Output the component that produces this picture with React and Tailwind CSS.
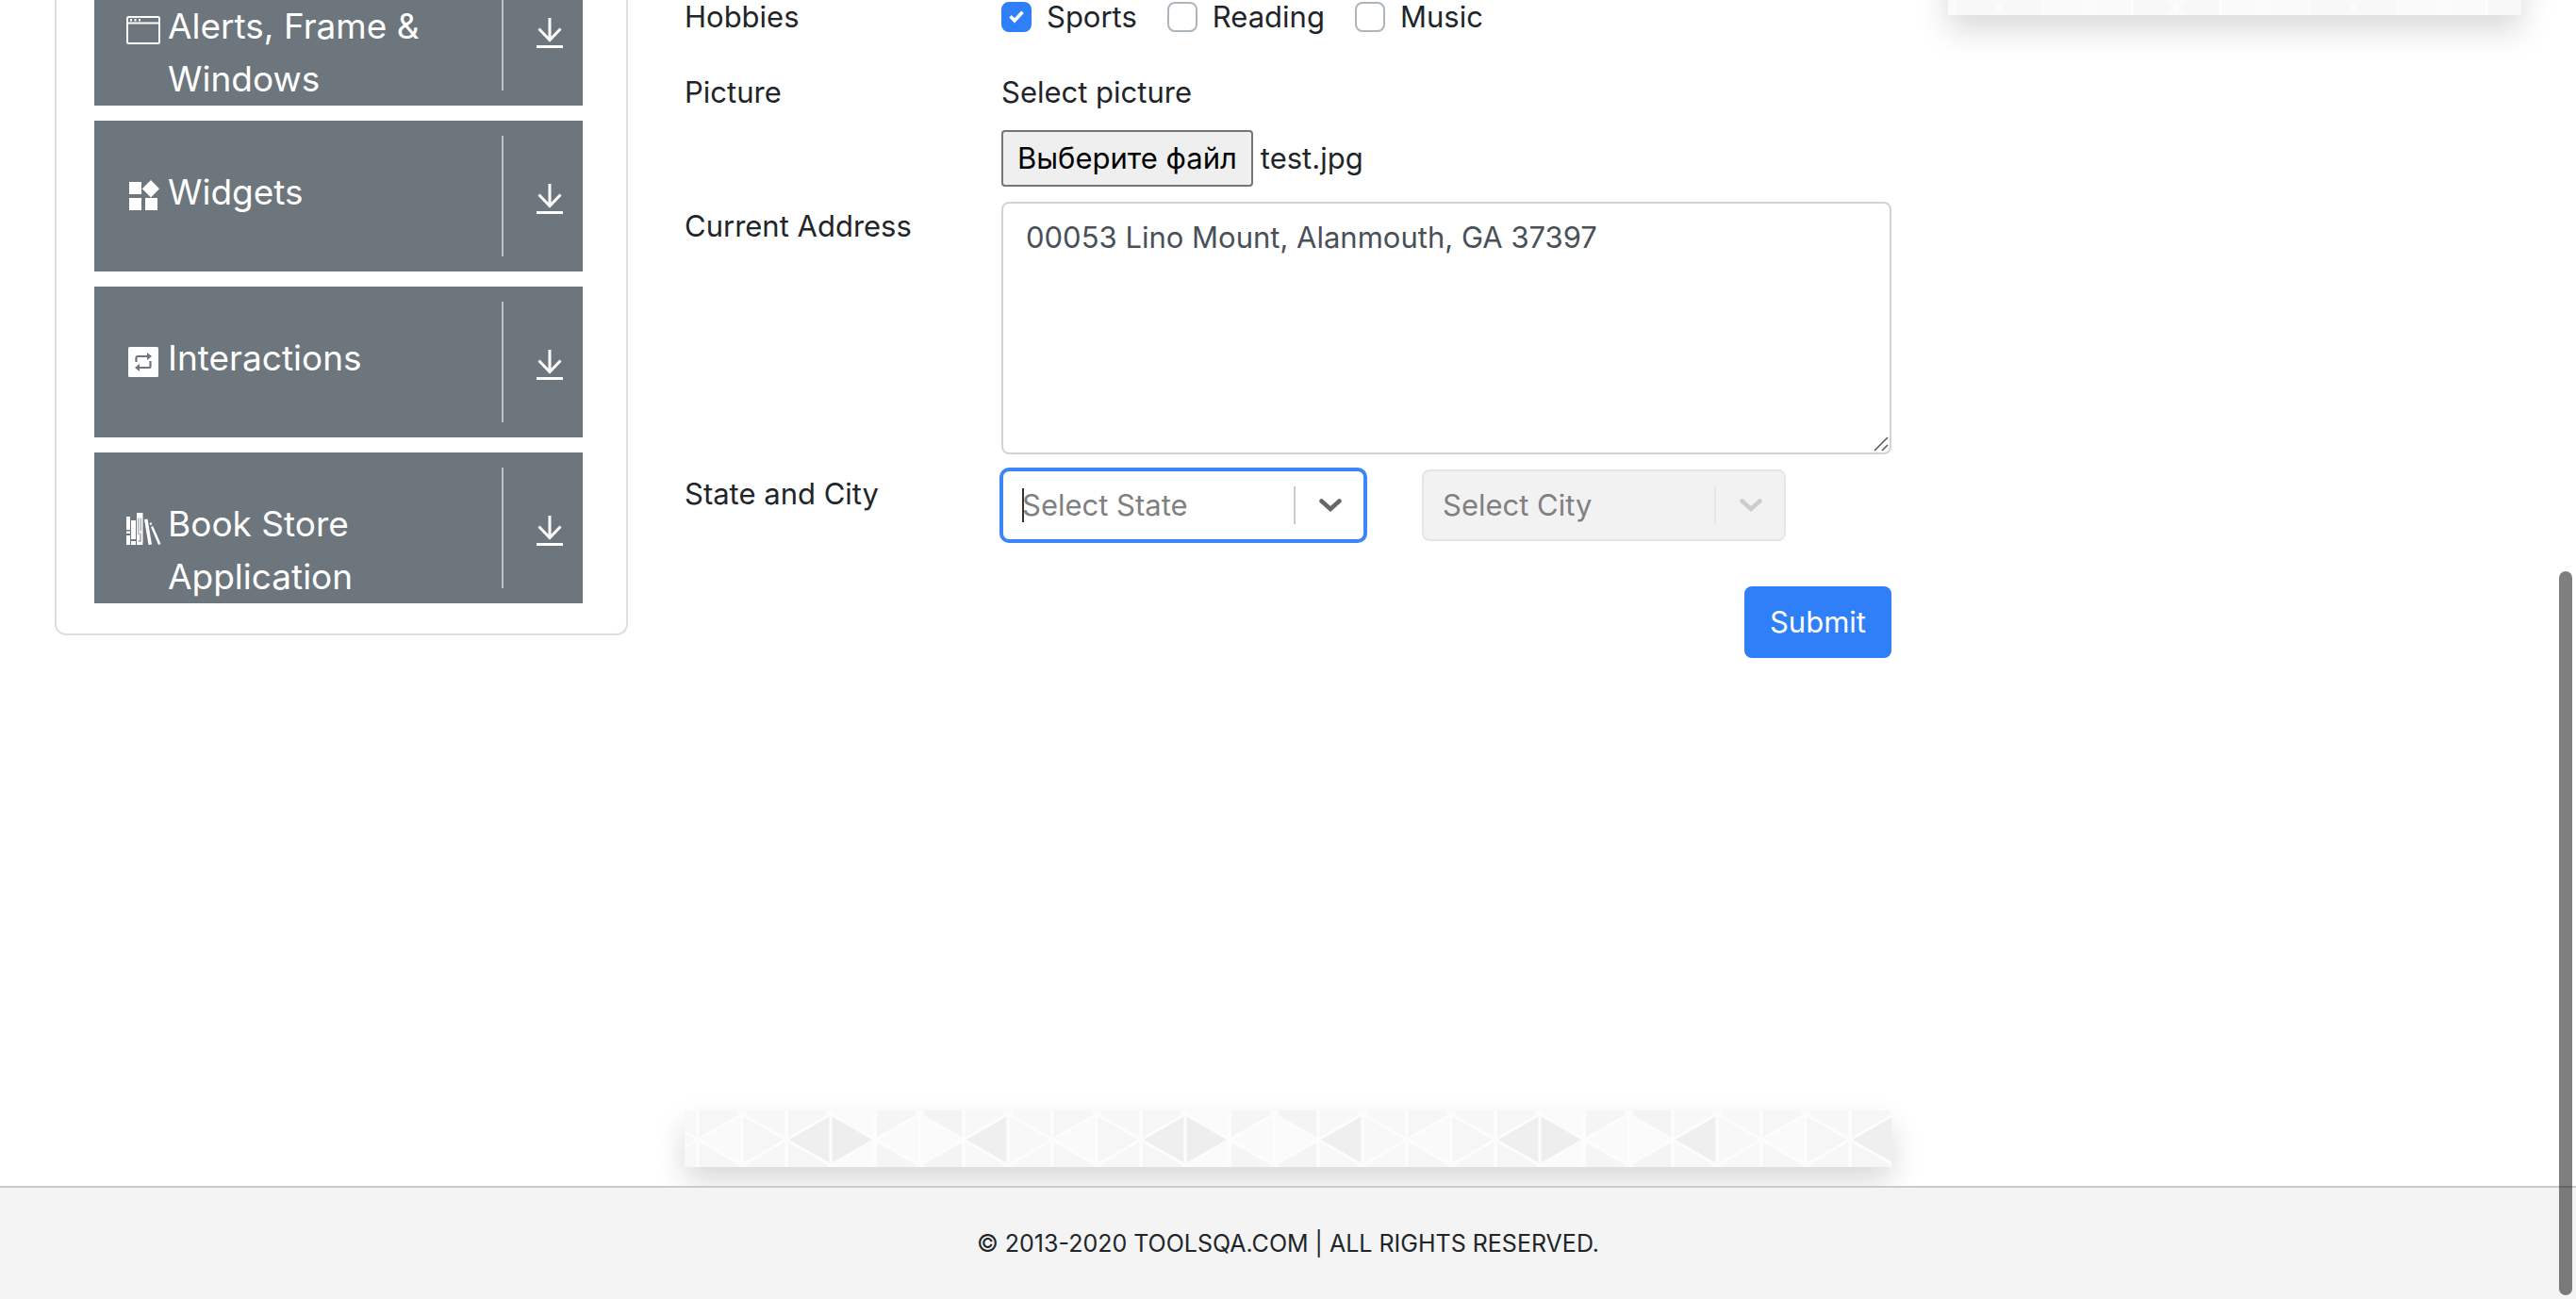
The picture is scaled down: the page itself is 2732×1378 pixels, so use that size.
import { useRef } from "react";

function WindowIcon() {
  return (
    <svg viewBox="0 0 36 36" className="mt-3.5 size-9 shrink-0" fill="none" stroke="currentColor">
      <rect x="1" y="4" width="34" height="28" rx="1.5" strokeWidth="2" />
      <path d="M1 10.5h34" strokeWidth="2" />
      <path d="M4 7.2h2M8.5 7.2h2M13 7.2h2" strokeWidth="2.4" />
    </svg>
  );
}

function WidgetsIcon() {
  return (
    <svg viewBox="0 0 36 36" className="mt-3.5 size-9 shrink-0" fill="currentColor">
      <path d="M3 3h13v13H3zM3 20h13v13H3zM20 20h13v13H20zM26 1l9 9.2-9 9.2-9.2-9.2z" />
    </svg>
  );
}

function SwapIcon() {
  return (
    <svg viewBox="0 0 36 36" className="mt-3.5 size-9 shrink-0">
      <rect x="2" y="2" width="32" height="32" rx="1.5" fill="currentColor" />
      <g fill="none" stroke="#6d757d" strokeWidth="2.2">
        <path d="M10.5 18v-4.500q0-1.500 1.500-1.500h11" />
        <path d="M25.5 17v5.500q0 1.500-1.500 1.500H13" />
      </g>
      <path d="M22 8l5 4-5 4zM14 20l-5 4 5 4z" fill="#6d757d" />
    </svg>
  );
}

function BooksIcon() {
  return (
    <svg viewBox="0 -1 36 36" className="mt-3.5 size-9 shrink-0 overflow-visible" fill="currentColor">
      <path d="M0 5h4v14H0zM0 20.500h4v2.500H0zM0 25h4v10H0zM5 9h5v20H5zM5 31h5v4H5z" />
      <path fillRule="evenodd" d="M11 1h6.500v34H11zM12.500 6.500v18h.8v-18zM14.800 6.500v14h.8v-14zM12.500 31.500h3v-9h-1v8h-2z" />
      <path d="M19 8l3.500-.5 4.500 27-3.500.5zM24.500 12l2-.8.800 2-2 .8zM26 16l2.200-.9 8.300 18.900-2.500 1z" />
    </svg>
  );
}

function DownloadIcon() {
  return (
    <svg viewBox="0 0 30 34" className="h-[34px] w-[30px]" fill="none" stroke="currentColor" strokeWidth="3">
      <path d="M15 1v23M3.500 12.500L15 24.500l11.500-12M1 31.500h28" />
    </svg>
  );
}

const menu = [
  { label: "Alerts, Frame & Windows", Icon: WindowIcon },
  { label: "Widgets", Icon: WidgetsIcon },
  { label: "Interactions", Icon: SwapIcon },
  { label: "Book Store Application", Icon: BooksIcon },
];

function Sidebar() {
  return (
    <nav className="-mt-12 flex flex-col gap-4 self-start rounded-b-xl border-2 border-t-0 border-[#dfdfdf] pr-[46px] pb-8 pl-10">
      {menu.map(({ label, Icon }) => (
        <button
          key={label}
          type="button"
          className="flex h-40 items-start bg-[#6d757d] text-left text-[37px] leading-14 text-white"
        >
          <span className="flex flex-1 gap-2 pt-12 pl-[34px]">
            <Icon />
            {label}
          </span>
          <span className="mt-4 flex h-32 w-[86px] items-center justify-center border-l-2 border-[#bfbfbf] pt-1.5 pl-3.5">
            <DownloadIcon />
          </span>
        </button>
      ))}
    </nav>
  );
}

function Hobby({ id, label, checked }) {
  return (
    <label htmlFor={id} className="flex items-center gap-4">
      <span className="relative flex size-8">
        <input
          id={id}
          type="checkbox"
          defaultChecked={checked}
          className="peer size-8 appearance-none rounded-lg border-2 border-[#adb5bd] bg-white checked:border-[#2f7ff8] checked:bg-[#2f7ff8]"
        />
        <svg
          viewBox="0 0 16 16"
          className="pointer-events-none absolute inset-2 hidden size-4 peer-checked:block"
          fill="none"
          stroke="#fff"
          strokeWidth="3.6"
        >
          <path d="M1.500 7.200L6 11.800l8.500-9" />
        </svg>
      </span>
      {label}
    </label>
  );
}

function Select({ id, label, placeholder, disabled, focused }) {
  return (
    <div className="relative flex">
      <select
        id={id}
        aria-label={label}
        disabled={disabled}
        className={
          focused
            ? "h-19 w-full appearance-none rounded-lg border-2 border-[#3d86f7] bg-white pl-5 text-[#808080] ring-2 ring-[#3d86f7] outline-none"
            : "h-19 w-full appearance-none rounded-lg border-2 border-[#e6e6e6] bg-[#f2f2f2] pl-5 text-[#808080] opacity-100 outline-none"
        }
      >
        <option>{placeholder}</option>
      </select>
      {focused && <span className="absolute top-5 left-[22px] h-9 w-0.5 bg-[#333]" />}
      <span
        className={
          focused
            ? "pointer-events-none absolute inset-y-[18px] right-0 flex w-[76px] items-center justify-center border-l-2 border-[#ccc] text-[#666]"
            : "pointer-events-none absolute inset-y-[18px] right-0 flex w-[76px] items-center justify-center border-l-2 border-[#e6e6e6] text-[#ccc]"
        }
      >
        <svg viewBox="0 0 24 14" className="h-3.5 w-6" fill="none" stroke="currentColor" strokeWidth="4.500" strokeLinecap="round">
          <path d="M2.500 2.500L12 11l9.500-8.500" />
        </svg>
      </span>
    </div>
  );
}

function PracticeForm() {
  const file = useRef(null);
  return (
    <form className="grid grid-cols-[69fr_236fr] items-start gap-x-[60px]">
      <span>Hobbies</span>
      <div className="flex h-9 items-center gap-8">
        <Hobby id="sports" label="Sports" checked />
        <Hobby id="reading" label="Reading" />
        <Hobby id="music" label="Music" />
      </div>

      <span className="mt-11">Picture</span>
      <div className="mt-11 flex flex-col gap-[22px]">
        <label htmlFor="picture">Select picture</label>
        <div className="flex items-center gap-2">
          <input ref={file} id="picture" type="file" className="hidden" />
          <button
            type="button"
            onClick={() => file.current.click()}
            className="h-15 rounded border-2 border-[#767676] bg-[#efefef] px-[15px] text-black"
          >
            Выберите файл
          </button>
          <span>test.jpg</span>
        </div>
      </div>

      <label htmlFor="address" className="mt-6">Current Address</label>
      <div className="relative mt-4 flex">
        <textarea
          id="address"
          defaultValue="00053 Lino Mount, Alanmouth, GA 37397"
          className="h-67 w-full resize-none rounded-lg border-2 border-[#ced4da] bg-white px-6 py-3 leading-12 text-[#495057] outline-none"
        />
        <svg
          viewBox="0 0 16 16"
          className="pointer-events-none absolute right-[3px] bottom-[3px] size-4"
          fill="none"
          stroke="#555"
          strokeWidth="1.500"
        >
          <path d="M1 15L15 1M9 15l6-6" />
        </svg>
      </div>

      <span className="mt-6">State and City</span>
      <div className="mt-4 grid grid-cols-[193fr_193fr_26fr] gap-[60px]">
        <Select id="state" label="State" placeholder="Select State" focused />
        <Select id="city" label="City" placeholder="Select City" disabled />
      </div>

      <button
        type="submit"
        className="col-span-2 mt-12 h-19 justify-self-end rounded-lg bg-[#2f7ff8] px-[27px] text-white"
      >
        Submit
      </button>
    </form>
  );
}

const columns = [
  { face: "#fafafa", corner: "#f6f6f6" },
  { face: "#f6f6f6", corner: "#f7f7f7" },
  { face: "#efefef", corner: "#f6f6f6" },
  { face: "#eeeeee", corner: "#fbfbfb" },
  { face: "#fafafa", corner: "#f5f5f5" },
  { face: "#fbfbfb", corner: "#f4f4f4" },
  { face: "#efefef", corner: "#f8f8f8" },
  { face: "#f8f8f8", corner: "#f8f8f8" },
];

function BottomBanner() {
  return (
    <div className="mt-auto mb-5 h-15 shadow-[0_16px_32px_rgba(0,0,0,0.15)]">
      <svg className="block h-full w-full bg-[#f7f7f7]">
        <defs>
          <pattern id="triangles" x="14" width="376" height="60" patternUnits="userSpaceOnUse">
            {columns.map(({ face, corner }, i) => {
              const x = i * 47;
              const near = i % 2 === 0 ? x : x + 47;
              const far = i % 2 === 0 ? x + 47 : x;
              return (
                <g key={x}>
                  <rect x={x} width="47" height="60" fill={corner} />
                  <path d={`M${near} 31L${far} 4V58Z`} fill={face} />
                </g>
              );
            })}
            {[0, 94, 188, 282].map((x) => (
              <path
                key={x}
                d={`M${x} 31L${x + 47} 4L${x + 94} 31L${x + 47} 58ZM${x + 42} 1L${x + 47} 4l5-3M${x + 42} 61L${x + 47} 58l5 3M${x} 0V60M${x + 47} 0V60M${x + 94} 0V60`}
                fill="none"
                stroke="#fdfdfd"
                strokeWidth="3"
              />
            ))}
          </pattern>
        </defs>
        <rect width="100%" height="60" fill="url(#triangles)" />
      </svg>
    </div>
  );
}

function SideBanner() {
  return (
    <aside className="-mt-36 h-40 self-start shadow-[0_16px_32px_rgba(0,0,0,0.15)]">
      <svg className="block h-full w-full">
        <defs>
          <pattern id="facets" x="7" width="188" height="16" patternUnits="userSpaceOnUse">
            <rect width="188" height="16" fill="#f8f8f8" />
            <rect x="94" width="94" height="16" fill="#fafafa" />
            <path
              d="M0 0v16M94 0v16M47 0v16M141 0v16M188 0v16M38 0l18 16M56 0L38 16M132 0l18 16M150 0l-18 16"
              stroke="#fcfcfc"
              strokeWidth="3"
            />
          </pattern>
        </defs>
        <rect width="100%" height="160" fill="url(#facets)" />
      </svg>
    </aside>
  );
}

export default function App() {
  return (
    <div className="flex min-h-screen flex-col overflow-hidden bg-white font-['Inter','Liberation_Sans',sans-serif] text-[31px] leading-9 text-[#212529]">
      <main className="grid flex-1 grid-cols-[19fr_40fr_19fr] gap-[60px] px-[58px]">
        <Sidebar />
        <section className="flex flex-col">
          <PracticeForm />
          <BottomBanner />
        </section>
        <SideBanner />
      </main>
      <footer className="flex h-30 items-center justify-center border-t-2 border-[#cbcbcb] bg-[#f4f4f4] text-[25px]">
        © 2013-2020 TOOLSQA.COM | ALL RIGHTS RESERVED.
      </footer>
      <div className="fixed right-1 bottom-1 h-192 w-3.5 rounded-full bg-black/50" />
    </div>
  );
}
